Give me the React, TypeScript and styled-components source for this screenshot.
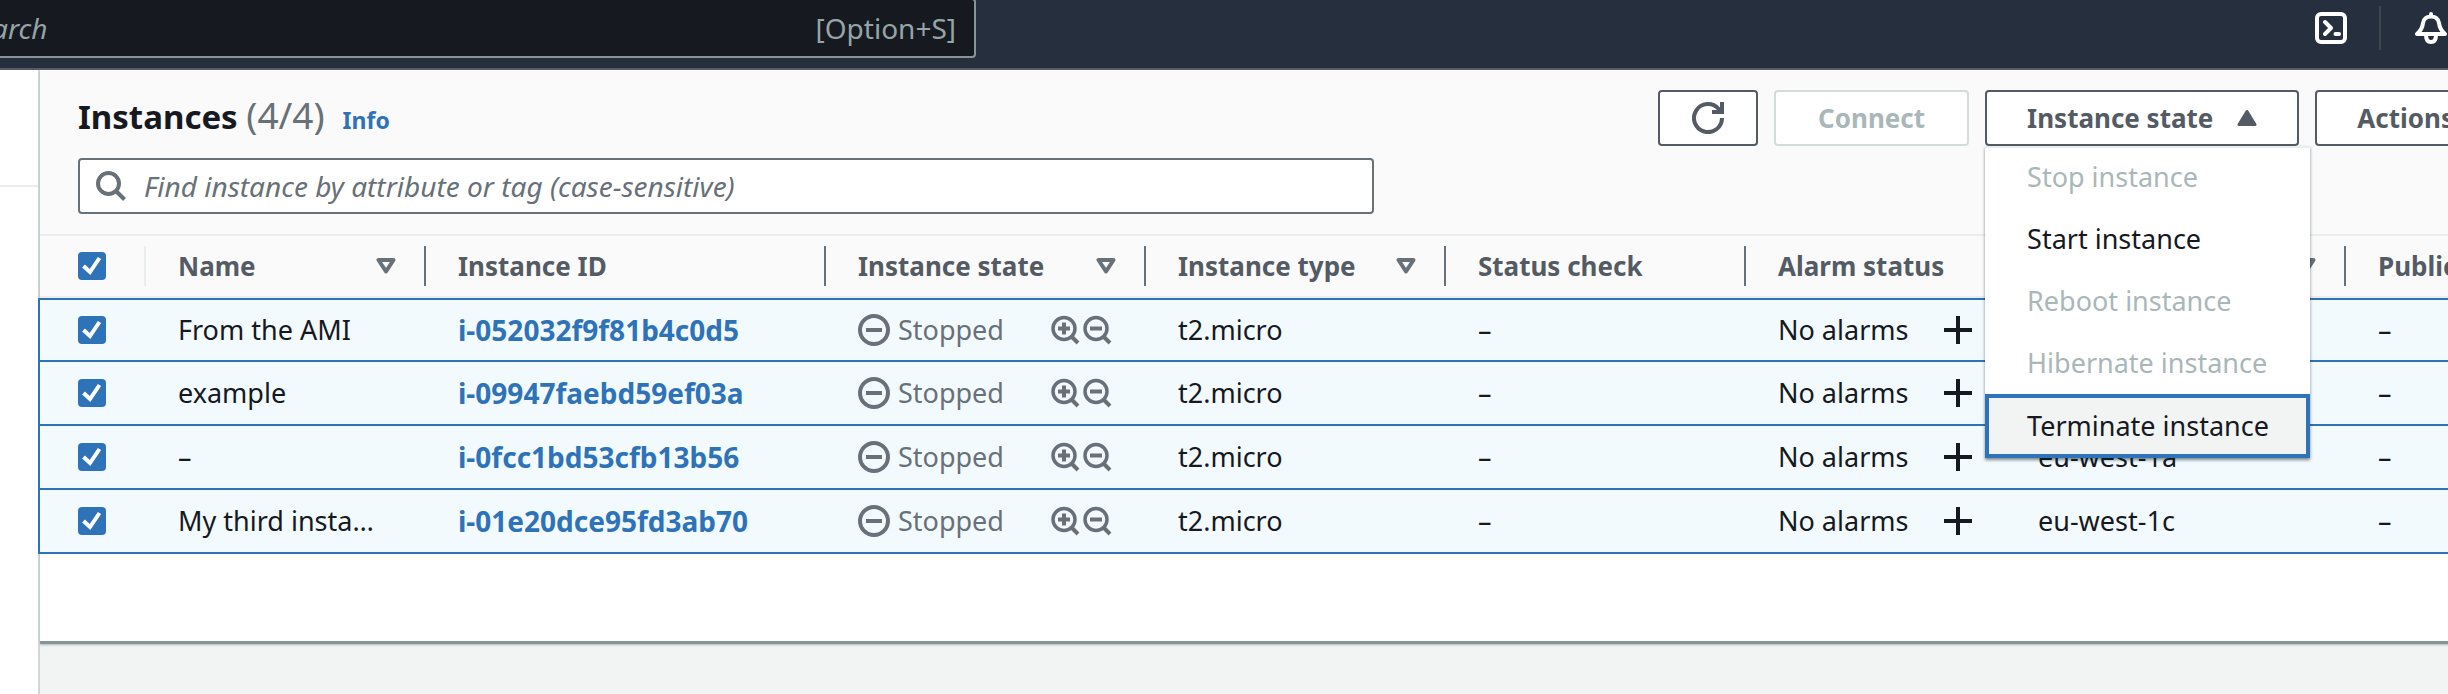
import React from "react";
import styled, { createGlobalStyle } from "styled-components";

const Global = createGlobalStyle`
  * { box-sizing: border-box; }
  body { margin: 0; background: #f2f3f3; overflow: hidden; }
  body, button, input { font-family: "Noto Sans", "Open Sans", sans-serif; font-size: 27px; line-height: 40px; color: #16191f; }
`;

const Page = styled.div`
  min-height: 100vh;
  display: flex;
  flex-direction: column;
  overflow: hidden;
`;

const TopBar = styled.header`
  height: 70px;
  flex: none;
  display: flex;
  align-items: flex-start;
  justify-content: space-between;
  background: #252f3e;
  border-bottom: 2px solid #545b64;
`;

const GlobalSearch = styled.label`
  width: 1042px;
  height: 60px;
  margin: -2px 0 0 -66px;
  padding: 0 18px 0 28px;
  display: flex;
  align-items: center;
  background: #16191f;
  border: 2px solid #879596;
  border-radius: 4px;
  color: #95a5a6;
  font-size: 28px;
`;

const GlobalInput = styled.input`
  flex: 1;
  min-width: 0;
  padding: 0;
  border: 0;
  outline: 0;
  background: transparent;
  font-size: 28px;
  &::placeholder { color: #95a5a6; font-style: italic; opacity: 1; }
`;

const TopActions = styled.div`
  height: 56px;
  padding-right: 1px;
  display: flex;
  align-items: center;
`;

const IconButton = styled.button`
  display: flex;
  padding: 0;
  border: 0;
  background: none;
  color: inherit;
`;

const TopIcon = styled(IconButton)`
  color: #ffffff;
`;

const TopDivider = styled.span`
  width: 2px;
  height: 44px;
  margin: 0 34px 0 32px;
  background: #414750;
`;

const Body = styled.div`
  flex: 1;
  display: flex;
`;

const SideNav = styled.nav`
  width: 38px;
  flex: none;
  background: #ffffff;
`;

const NavRule = styled.hr`
  margin: 115px 0 0;
  border: 0;
  border-top: 2px solid #eaeded;
`;

const Main = styled.main`
  flex: 1;
  min-width: 0;
  border-left: 2px solid #d2d6d8;
`;

const Panel = styled.section`
  width: calc(100% + 132px);
  background: #ffffff;
  padding-bottom: 87px;
  border-bottom: 3px solid #879596;
  box-shadow: 0 1px 2px #aab7b8;
`;

const PanelHeader = styled.div`
  display: flex;
  flex-direction: column;
  gap: 12px;
  padding: 20px 40px 20px 38px;
  background: #fafafa;
  border-bottom: 2px solid #eaeded;
`;

const HeaderRow = styled.div`
  display: flex;
  align-items: flex-start;
  justify-content: space-between;
`;

const TitleGroup = styled.div`
  display: flex;
  align-items: baseline;
`;

const Title = styled.h1`
  margin: 0;
  font-size: 33px;
  line-height: 50px;
  font-weight: 700;
`;

const Count = styled.span`
  color: #687078;
  font-size: 37px;
  font-weight: 400;
`;

const InfoLink = styled.a`
  margin-left: 18px;
  font-size: 23px;
  font-weight: 700;
  color: #2e73b8;
  text-decoration: none;
`;

const Buttons = styled.div`
  display: flex;
  gap: 16px;
`;

const Button = styled.button<{ $pad?: number }>`
  height: 56px;
  padding: 0 ${(p) => p.$pad ?? 40}px;
  display: flex;
  align-items: center;
  gap: 24px;
  background: #ffffff;
  border: 2px solid #545b64;
  border-radius: 4px;
  color: #545b64;
  font-size: 26px;
  font-weight: 700;
  white-space: nowrap;
  &:disabled { border-color: #d5dbdb; color: #aab7b8; }
`;

const MenuAnchor = styled.div`
  position: relative;
`;

const Menu = styled.ul`
  position: absolute;
  z-index: 2;
  top: 100%;
  left: 0;
  width: 325px;
  margin: 0;
  padding: 0;
  list-style: none;
  background: #ffffff;
  box-shadow: inset 0 2px 0 #eaeded, 0 2px 3px rgba(0, 28, 36, 0.5);
`;

const MenuItem = styled.button<{ $focused?: boolean }>`
  width: 100%;
  height: ${(p) => (p.$focused ? 64 : 62)}px;
  padding: 0 ${(p) => (p.$focused ? 38 : 42)}px;
  display: flex;
  align-items: center;
  border: ${(p) => (p.$focused ? "4px solid #2e73b8" : "0")};
  background: ${(p) => (p.$focused ? "#f2f3f3" : "transparent")};
  white-space: nowrap;
  &:disabled { color: #aab7b8; }
`;

const Filter = styled.label`
  width: 1296px;
  max-width: 100%;
  height: 56px;
  padding: 0 16px;
  display: flex;
  align-items: center;
  gap: 18px;
  background: #ffffff;
  border: 2px solid #687078;
  border-radius: 4px;
  color: #687078;
`;

const FilterInput = styled.input`
  flex: 1;
  min-width: 0;
  padding: 0;
  border: 0;
  outline: 0;
  background: transparent;
  font-size: 28px;
  &::placeholder { color: #687078; font-style: italic; opacity: 1; }
`;

const Table = styled.table`
  width: 100%;
  table-layout: fixed;
  border-collapse: separate;
  border-spacing: 0;
`;

const HeadCell = styled.th`
  height: 62px;
  padding: 0;
  text-align: left;
  background: #fafafa;
  color: #545b64;
  font-size: 26px;
  white-space: nowrap;
  border-bottom: 2px solid #eaeded;
`;

const HeadInner = styled.div<{ $first?: boolean; $faint?: boolean }>`
  height: 40px;
  padding-left: ${(p) => (p.$first ? 38 : 32)}px;
  padding-right: 28px;
  display: flex;
  align-items: center;
  justify-content: space-between;
  border-right: 2px solid ${(p) => (p.$faint ? "#eaeded" : "#687078")};
`;

const Row = styled.tr`
  background: #f3fafe;
  td { border-bottom: 2px solid #2e73b8; }
  &:first-child td { border-top: 2px solid #2e73b8; }
`;

const Cell = styled.td<{ $first?: boolean; $wideGap?: boolean }>`
  height: 64px;
  padding: 0 ${(p) => (p.$wideGap ? 40 : 34)}px 0 ${(p) => (p.$first ? 38 : 32)}px;
  white-space: nowrap;
  overflow: hidden;
  text-overflow: ellipsis;
  ${(p) => p.$first && "box-shadow: -2px 0 0 #2e73b8; overflow: visible;"}
`;

const CellFlex = styled.div`
  display: flex;
  align-items: center;
  justify-content: space-between;
`;

const IdLink = styled.a`
  color: #2e73b8;
  font-size: 28px;
  font-weight: 700;
  text-decoration: none;
`;

const Status = styled.span`
  display: flex;
  align-items: center;
  gap: 8px;
  color: #687078;
`;

const ZoomButtons = styled.span`
  display: flex;
  gap: 2px;
  color: #687078;
`;

const CheckWrap = styled.label`
  display: grid;
  width: 28px;
  height: 28px;
  & > * { grid-area: 1 / 1; }
  svg { pointer-events: none; z-index: 1; }
`;

const CheckInput = styled.input`
  appearance: none;
  width: 28px;
  height: 28px;
  margin: 0;
  border-radius: 4px;
  border: 2px solid #687078;
  background: #ffffff;
  &:checked { border-color: #2e73b8; background: #2e73b8; }
`;

const Check = ({ label }: { label: string }) => (
  <CheckWrap>
    <CheckInput type="checkbox" defaultChecked aria-label={label} />
    <svg width="28" height="28" viewBox="0 0 28 28" fill="none" stroke="#fff" strokeWidth="4">
      <path d="M5.500 14l6.500 6L21.500 6" />
    </svg>
  </CheckWrap>
);

const SearchIcon = () => (
  <svg width="30" height="30" viewBox="0 0 30 30" fill="none" stroke="currentColor" strokeWidth="4">
    <circle cx="12.500" cy="12.500" r="10.500" />
    <path d="M20 20l8.500 8.500" />
  </svg>
);

const MagnifyIcon = ({ plus }: { plus?: boolean }) => (
  <svg width="30" height="30" viewBox="0 0 30 30" fill="none" stroke="currentColor" strokeWidth="4">
    <circle cx="14" cy="13.500" r="11" strokeWidth="3.500" />
    <path d="M21.500 21.500l6.500 6.500M8 13.500h12" />
    {plus && <path d="M14 7.500v12" />}
  </svg>
);

const StoppedIcon = () => (
  <svg width="32" height="32" viewBox="0 0 32 32" fill="none" stroke="currentColor" strokeWidth="4">
    <circle cx="16" cy="16" r="14" />
    <path d="M8 16h16" />
  </svg>
);

const PlusIcon = () => (
  <svg width="28" height="28" viewBox="0 0 28 28" stroke="#16191f" strokeWidth="4">
    <path d="M14 0v28M0 14h28" />
  </svg>
);

const RefreshIcon = () => (
  <svg width="32" height="32" viewBox="0 0 32 32" fill="none" stroke="currentColor" strokeWidth="4">
    <path d="M30 16a14 14 0 1 1-3.500-9.200l2 3" />
    <path d="M30 0v10H20" />
  </svg>
);

const SortIcon = () => (
  <svg width="20" height="17" viewBox="0 0 20 17" fill="none" stroke="#687078" strokeWidth="4" strokeLinejoin="round">
    <path d="M2.500 2h15L10 13.500z" />
  </svg>
);

const Caret = ({ down }: { down?: boolean }) => (
  <svg width="20" height="18" viewBox="0 0 20 18" fill="currentColor" stroke="currentColor" strokeWidth="3" strokeLinejoin="round">
    <path d={down ? "M2 2.500h16L10 15.500z" : "M2 15.500h16L10 2.500z"} />
  </svg>
);

const ShellIcon = () => (
  <svg width="32" height="32" viewBox="0 0 32 32" fill="none" stroke="currentColor" strokeWidth="4" strokeLinecap="round" strokeLinejoin="round">
    <rect x="2" y="2" width="28" height="28" rx="4" />
    <path d="M10 10l6 6-6 6" />
    <path d="M20.500 22h3.500" />
  </svg>
);

const BellIcon = () => (
  <svg width="32" height="32" viewBox="0 0 32 32" fill="none" stroke="currentColor" strokeWidth="4" strokeLinecap="round" strokeLinejoin="round">
    <path d="M16 2v2M2 22h28c-4-3.500-5.500-6-6-11C23.500 6.500 20 4.500 16 4.500S8.500 6.500 8 11c-.500 5-2 7.500-6 11z" />
    <path d="M11 23c0 4.500 2 7 5 7s5-2.500 5-7" />
  </svg>
);

const columns: { title: string; width?: number; sortable?: boolean }[] = [
  { title: "Name", width: 280, sortable: true },
  { title: "Instance ID", width: 400 },
  { title: "Instance state", width: 320, sortable: true },
  { title: "Instance type", width: 300, sortable: true },
  { title: "Status check", width: 300 },
  { title: "Alarm status", width: 260 },
  { title: "Availability Zone", width: 340, sortable: true },
  { title: "Public IPv4" },
];

const instances = [
  { name: "From the AMI", id: "i-052032f9f81b4c0d5", zone: "eu-west-1a" },
  { name: "example", id: "i-09947faebd59ef03a", zone: "eu-west-1a" },
  { name: "–", id: "i-0fcc1bd53cfb13b56", zone: "eu-west-1a" },
  { name: "My third instance", id: "i-01e20dce95fd3ab70", zone: "eu-west-1c" },
];

const menuItems = [
  { label: "Stop instance", disabled: true },
  { label: "Start instance" },
  { label: "Reboot instance", disabled: true },
  { label: "Hibernate instance", disabled: true },
  { label: "Terminate instance", focused: true },
];

export default function App() {
  return (
    <Page>
      <Global />
      <TopBar>
        <GlobalSearch>
          <GlobalInput type="text" placeholder="Search" aria-label="Search" />
          <span>[Option+S]</span>
        </GlobalSearch>
        <TopActions>
          <TopIcon aria-label="CloudShell"><ShellIcon /></TopIcon>
          <TopDivider />
          <TopIcon aria-label="Notifications"><BellIcon /></TopIcon>
        </TopActions>
      </TopBar>
      <Body>
        <SideNav><NavRule /></SideNav>
        <Main>
          <Panel>
            <PanelHeader>
              <HeaderRow>
                <TitleGroup>
                  <Title>Instances <Count>(4/4)</Count></Title>
                  <InfoLink href="#info">Info</InfoLink>
                </TitleGroup>
                <Buttons>
                  <Button $pad={32} aria-label="Refresh"><RefreshIcon /></Button>
                  <Button $pad={42} disabled>Connect</Button>
                  <MenuAnchor>
                    <Button aria-expanded="true">Instance state <Caret /></Button>
                    <Menu>
                      {menuItems.map((item) => (
                        <li key={item.label}>
                          <MenuItem disabled={item.disabled} $focused={item.focused}>{item.label}</MenuItem>
                        </li>
                      ))}
                    </Menu>
                  </MenuAnchor>
                  <Button>Actions <Caret down /></Button>
                </Buttons>
              </HeaderRow>
              <Filter>
                <SearchIcon />
                <FilterInput type="text" placeholder="Find instance by attribute or tag (case-sensitive)" aria-label="Find instance" />
              </Filter>
            </PanelHeader>
            <Table>
              <colgroup>
                <col width={106} />
                {columns.map((c) => <col key={c.title} width={c.width} />)}
              </colgroup>
              <thead>
                <tr>
                  <HeadCell><HeadInner $first $faint><Check label="Select all" /></HeadInner></HeadCell>
                  {columns.map((c) => (
                    <HeadCell key={c.title}>
                      <HeadInner>{c.title}{c.sortable && <SortIcon />}</HeadInner>
                    </HeadCell>
                  ))}
                </tr>
              </thead>
              <tbody>
                {instances.map((row) => (
                  <Row key={row.id}>
                    <Cell $first><Check label={`Select ${row.id}`} /></Cell>
                    <Cell $wideGap>{row.name}</Cell>
                    <Cell><IdLink href={`#${row.id}`}>{row.id}</IdLink></Cell>
                    <Cell>
                      <CellFlex>
                        <Status><StoppedIcon />Stopped</Status>
                        <ZoomButtons>
                          <IconButton aria-label="Include in filter"><MagnifyIcon plus /></IconButton>
                          <IconButton aria-label="Exclude from filter"><MagnifyIcon /></IconButton>
                        </ZoomButtons>
                      </CellFlex>
                    </Cell>
                    <Cell>t2.micro</Cell>
                    <Cell>–</Cell>
                    <Cell>
                      <CellFlex>
                        No alarms
                        <IconButton aria-label="Add alarm"><PlusIcon /></IconButton>
                      </CellFlex>
                    </Cell>
                    <Cell>{row.zone}</Cell>
                    <Cell>–</Cell>
                  </Row>
                ))}
              </tbody>
            </Table>
          </Panel>
        </Main>
      </Body>
    </Page>
  );
}
